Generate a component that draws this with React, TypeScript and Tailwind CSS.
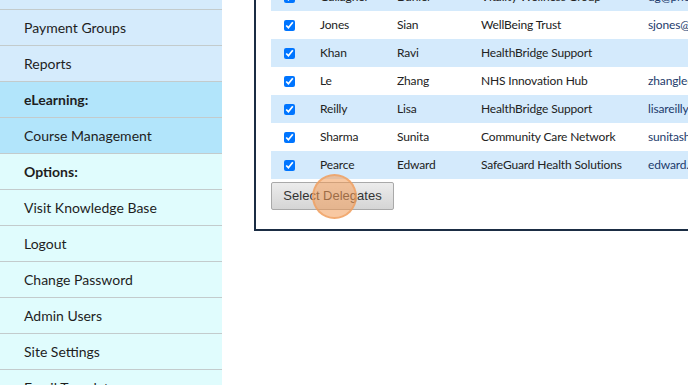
const MENU: { label: string; bold?: boolean; tone: 'blue' | 'sky' | 'cyan' }[] = [
  { label: 'Delegates', tone: 'blue' },
  { label: 'Payment Groups', tone: 'blue' },
  { label: 'Reports', tone: 'blue' },
  { label: 'eLearning:', bold: true, tone: 'sky' },
  { label: 'Course Management', tone: 'sky' },
  { label: 'Options:', bold: true, tone: 'cyan' },
  { label: 'Visit Knowledge Base', tone: 'cyan' },
  { label: 'Logout', tone: 'cyan' },
  { label: 'Change Password', tone: 'cyan' },
  { label: 'Admin Users', tone: 'cyan' },
  { label: 'Site Settings', tone: 'cyan' },
  { label: 'Email Templates', tone: 'cyan' },
];

const TONES = {
  blue: 'bg-[#d5ebfc]',
  sky: 'bg-[#b2e5fb]',
  cyan: 'bg-[#e0fcfd]',
};

const DELEGATES = [
  { last: 'Gallagher', first: 'Daniel', org: 'Vitality Wellness Group', email: 'dg@phoenixhealth.org' },
  { last: 'Jones', first: 'Sian', org: 'WellBeing Trust', email: 'sjones@wellbeing.org' },
  { last: 'Khan', first: 'Ravi', org: 'HealthBridge Support', email: '' },
  { last: 'Le', first: 'Zhang', org: 'NHS Innovation Hub', email: 'zhangle@nhs.net' },
  { last: 'Reilly', first: 'Lisa', org: 'HealthBridge Support', email: 'lisareilly@healthbridge.org' },
  { last: 'Sharma', first: 'Sunita', org: 'Community Care Network', email: 'sunitasharma@ccn.org' },
  { last: 'Pearce', first: 'Edward', org: 'SafeGuard Health Solutions', email: 'edward.pearce@safeguard.org' },
];

function Sidebar() {
  return (
    <div className="mt-[-26px] w-[222px] shrink-0">
      {MENU.map((m) => (
        <div
          key={m.label}
          className={`flex h-[36px] items-center border-b border-[#c3cbcc] pl-[24px] text-[14px] text-[#1e1e1e] ${TONES[m.tone]} ${
            m.bold ? 'font-bold' : ''
          }`}
        >
          {m.label}
        </div>
      ))}
    </div>
  );
}

function DelegateTable() {
  return (
    <div className="mt-[-17px] w-[460px] border-b-2 border-l-2 border-[#1b2d44] pb-[19px] pl-[15px]">
      {DELEGATES.map((d, i) => (
        <div
          key={d.last}
          className={`flex h-[28px] items-center text-[12px] tracking-[-0.15px] text-[#222] ${
            i % 2 === 0 ? 'bg-[#d4eafc]' : 'bg-white'
          }`}
        >
          <div className="flex w-[49px] shrink-0 pl-[13px]">
            <input type="checkbox" defaultChecked className="m-0 h-[11px] w-[11px]" />
          </div>
          <div className="w-[77px] shrink-0">{d.last}</div>
          <div className="w-[84px] shrink-0">{d.first}</div>
          <div className="w-[167px] shrink-0">{d.org}</div>
          <div className="whitespace-nowrap text-[#1d3b6c]">{d.email}</div>
        </div>
      ))}
      <div className="relative mt-[3px]">
        <button
          type="button"
          className="h-[28px] w-[123px] rounded-[2px] border border-[#a9a9a9] bg-gradient-to-b from-[#ececec] to-[#d5d5d5] font-['Liberation_Sans',sans-serif] text-[13px] text-[#333]"
        >
          Select Delegates
        </button>
        {/* click marker */}
        <span className="pointer-events-none absolute left-[41px] top-[-8px] h-[45px] w-[45px] rounded-full border-2 border-[#f0a060]/70 bg-[#f29a55]/55" />
      </div>
    </div>
  );
}

export default function App() {
  return (
    <div className="flex h-[385px] w-[688px] overflow-hidden bg-white font-['Lato',sans-serif]">
      <Sidebar />
      <div className="ml-[32px] min-w-0 flex-1 overflow-hidden">
        <DelegateTable />
      </div>
    </div>
  );
}
